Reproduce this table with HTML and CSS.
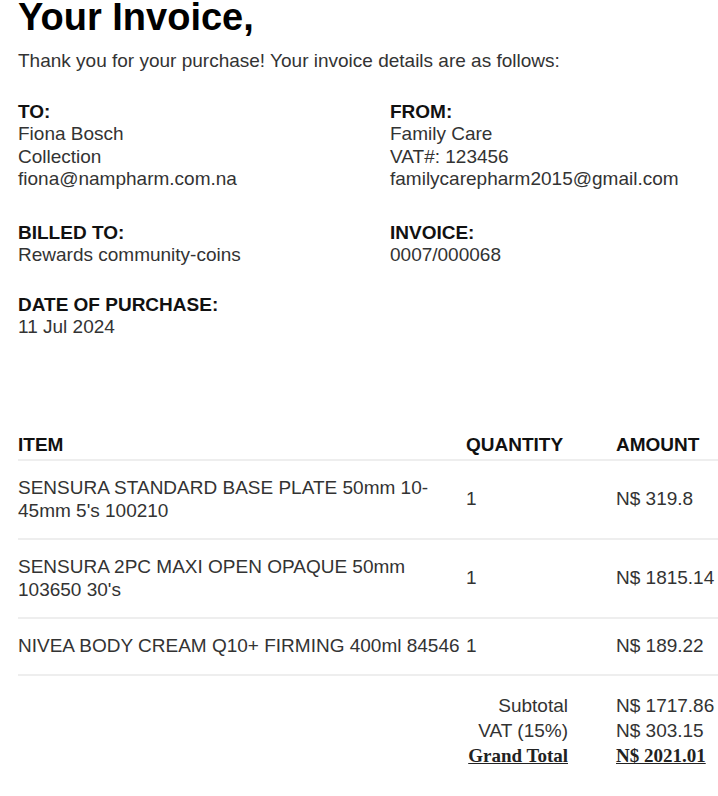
FILE: index.html
```html
<!DOCTYPE html>
<html lang="en">
<head>
<meta charset="utf-8">
<title>Your Invoice</title>
<link rel="stylesheet" href="styles.css">
</head>
<body>
<div class="invoice">
  <h1 class="title">Your Invoice,</h1>
  <p class="intro">Thank you for your purchase! Your invoice details are as follows:</p>

  <div class="info-row info-row--first">
    <div class="info-col">
      <div class="label">TO:</div>
      <div>Fiona Bosch</div>
      <div>Collection</div>
      <div>fiona@nampharm.com.na</div>
    </div>
    <div class="info-col info-col--right">
      <div class="label">FROM:</div>
      <div>Family Care</div>
      <div>VAT#: 123456</div>
      <div>familycarepharm2015@gmail.com</div>
    </div>
  </div>

  <div class="info-row info-row--second">
    <div class="info-col">
      <div class="label">BILLED TO:</div>
      <div>Rewards community-coins</div>
    </div>
    <div class="info-col info-col--right">
      <div class="label">INVOICE:</div>
      <div>0007/000068</div>
    </div>
  </div>

  <div class="info-row info-row--third">
    <div class="info-col">
      <div class="label">DATE OF PURCHASE:</div>
      <div>11 Jul 2024</div>
    </div>
  </div>

  <table class="items">
    <colgroup>
      <col class="col-item">
      <col class="col-qty">
      <col class="col-amount">
    </colgroup>
    <thead>
      <tr>
        <th>ITEM</th>
        <th>QUANTITY</th>
        <th>AMOUNT</th>
      </tr>
    </thead>
    <tbody>
      <tr>
        <td>SENSURA STANDARD BASE PLATE 50mm 10-45mm 5's 100210</td>
        <td>1</td>
        <td>N$ 319.8</td>
      </tr>
      <tr>
        <td>SENSURA 2PC MAXI OPEN OPAQUE 50mm 103650 30's</td>
        <td>1</td>
        <td>N$ 1815.14</td>
      </tr>
      <tr>
        <td>NIVEA BODY CREAM Q10+ FIRMING 400ml 84546</td>
        <td>1</td>
        <td>N$ 189.22</td>
      </tr>
    </tbody>
    <tfoot>
      <tr class="total-first">
        <td colspan="2" class="total-label">Subtotal</td>
        <td>N$ 1717.86</td>
      </tr>
      <tr>
        <td colspan="2" class="total-label">VAT (15%)</td>
        <td>N$ 303.15</td>
      </tr>
      <tr class="grand">
        <td colspan="2" class="total-label"><span class="grand-text">Grand Total</span></td>
        <td><span class="grand-text">N$ 2021.01</span></td>
      </tr>
    </tfoot>
  </table>
</div>
</body>
</html>
```

FILE: styles.css
```css
html, body {
  margin: 0;
  padding: 0;
  background: #ffffff;
}

body {
  font-family: "Liberation Sans", Arial, sans-serif;
  font-size: 19px;
  line-height: 22.5px;
  color: #333333;
}

.invoice {
  padding: 2px 0 0 18px;
}

.title {
  margin: 0;
  font-size: 38px;
  line-height: 30px;
  font-weight: bold;
  color: #000000;
}

.intro {
  margin: 18px 0 0;
}

.info-row {
  display: flex;
}

.info-row--first {
  margin-top: 28px;
}

.info-row--second {
  margin-top: 31px;
}

.info-row--third {
  margin-top: 27px;
}

.info-col {
  flex: 0 0 372px;
}

.info-col--right {
  flex: 1 1 auto;
}

.label {
  font-weight: bold;
  color: #111111;
}

.items {
  margin-top: 95px;
  width: 700px;
  border-collapse: collapse;
  table-layout: fixed;
}

.col-item {
  width: 448px;
}

.col-qty {
  width: 150px;
}

.col-amount {
  width: 102px;
}

.items th {
  text-align: left;
  font-weight: bold;
  color: #111111;
  padding: 0 0 3px;
  border-bottom: 2px solid #eeeeee;
}

.items td {
  padding: 0;
  vertical-align: middle;
}

.items tbody td {
  padding: 16px 0;
  border-bottom: 2px solid #eeeeee;
}

.items tfoot td {
  padding: 1.25px 0;
}

.items tfoot .total-first td {
  padding-top: 19.5px;
}

.items .total-label {
  text-align: right;
  padding-right: 48px;
}

.grand-text {
  font-family: "Liberation Serif", "Times New Roman", serif;
  font-weight: bold;
  color: #222222;
  text-decoration: underline;
}
```
